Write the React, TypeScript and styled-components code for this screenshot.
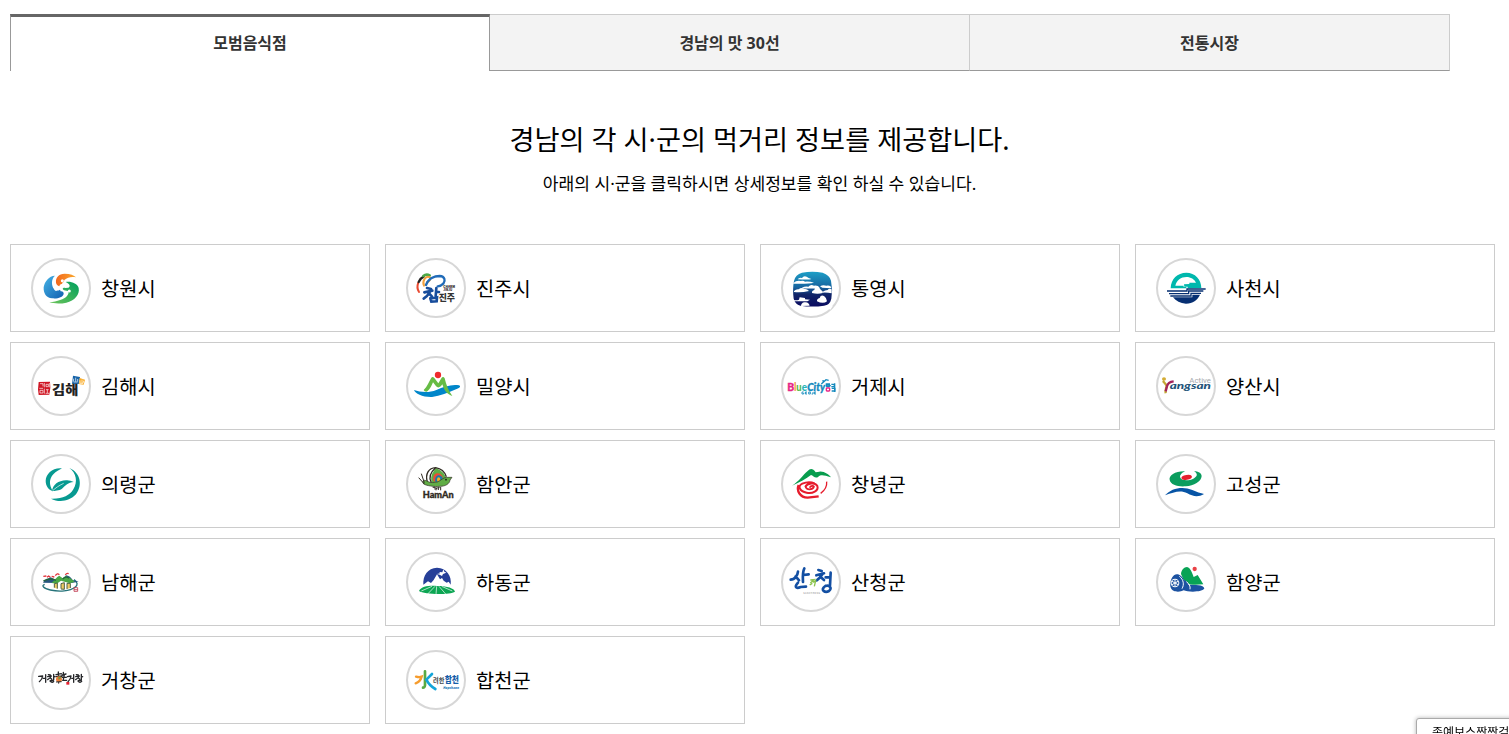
import React from 'react';
import styled, { createGlobalStyle } from 'styled-components';

const GlobalStyle = createGlobalStyle`
  * { box-sizing: border-box; }
  html, body { margin: 0; padding: 0; background: #fff; overflow: hidden; }
  body { font-family: 'Noto Sans', 'Noto Sans CJK KR', sans-serif; color: #000; }
`;

const Page = styled.main`
  height: 734px;
  padding: 14px 0 0 10px;
  overflow: hidden;
`;

const TabList = styled.ul`
  display: flex;
  width: 1440px;
  height: 57px;
  margin: 0;
  padding: 0;
  list-style: none;
`;

const Tab = styled.li<{ $active?: boolean }>`
  flex: ${(p) => (p.$active ? '0 0 480px' : '1 1 0')};
  display: flex;
  align-items: center;
  justify-content: center;
  padding-bottom: ${(p) => (p.$active ? '2px' : '0')};
  font-size: 16px;
  line-height: 24px;
  font-weight: 700;
  color: #333;
  cursor: pointer;
  background: ${(p) => (p.$active ? '#fff' : '#f3f3f3')};
  border-style: solid;
  border-width: ${(p) => (p.$active ? '3px 1px 0 1px' : '1px 0 1px 0')};
  border-color: ${(p) => (p.$active ? '#666 #999 #999 #999' : '#ccc #ccc #999 #ccc')};
  &:last-child {
    flex: 0 0 481px;
    border-left-width: 1px;
    border-right-width: 1px;
  }
`;

const Intro = styled.header`
  height: 173px;
  padding-top: 49px;
  text-align: center;
`;

const Title = styled.h1`
  margin: 0;
  font-size: 27.2px;
  line-height: 40px;
  font-weight: 400;
`;

const Guide = styled.p`
  margin: 11px 0 0;
  font-size: 17.1px;
  line-height: 26px;
`;

const RegionGrid = styled.ul`
  display: grid;
  grid-template-columns: repeat(4, 360px);
  grid-auto-rows: 88px;
  gap: 10px 15px;
  margin: 0;
  padding: 0;
  list-style: none;
`;

const RegionCard = styled.li`
  display: flex;
  align-items: center;
  gap: 10px;
  padding: 0 20px;
  border: 1px solid #ccc;
  cursor: pointer;
`;

const Badge = styled.span`
  flex: none;
  width: 60px;
  height: 60px;
  border: 2px solid #d7d7d7;
  border-radius: 50%;
  svg { display: block; width: 56px; height: 56px; overflow: visible; }
`;

const RegionName = styled.span`
  padding-top: 2px;
  font-size: 19.8px;
  line-height: 30px;
`;

const Toast = styled.aside`
  position: fixed;
  left: 1416px;
  top: 718px;
  width: 140px;
  height: 40px;
  padding: 6px 0 0 15px;
  border: 1px solid #aaa;
  border-radius: 3px;
  background: #fff;
  box-shadow: 0 0 4px rgba(0, 0, 0, 0.3);
  font-size: 12px;
  line-height: 16px;
  white-space: nowrap;
`;

const KR = "'Noto Sans CJK KR', sans-serif";

/* Emblem artwork is drawn on a three-times grid; `row` picks the vertical origin. */
const Emblem = ({ row = 0, children }: { row?: number; children: React.ReactNode }) => (
  <svg viewBox={`99 ${60 + row * 294} 168 168`} fontFamily={KR} aria-hidden="true">{children}</svg>
);

const Changwon = () => (
  <Emblem>
    <defs>
      <linearGradient id="cwB" x1="0" y1="0" x2="1" y2="1"><stop stopColor="#45b4e6" /><stop offset="1" stopColor="#125fb0" /></linearGradient>
      <linearGradient id="cwO" x1="0" y1="0" x2="1" y2="0"><stop stopColor="#f2671f" /><stop offset="1" stopColor="#fba92c" /></linearGradient>
      <linearGradient id="cwG" x1="0" y1="1" x2="1" y2="0"><stop stopColor="#6dc45a" /><stop offset="1" stopColor="#009f5c" /></linearGradient>
    </defs>
    <path fill="url(#cwB)" d="M165 107C147 108 134 124 131 142C130 160 139 174 156 175C173 177 188 172 191 162C192 157 187 153 182 154L180 149C174 153 166 153 162 147C154 137 153 116 165 107Z" />
    <path fill="url(#cwO)" d="M168 128C166 112 176 102 194 101C211 101 222 106 228 112C215 109 203 111 193 120C192 124 191 127 188 127L186 132C182 131 179 134 178 139C173 137 169 133 168 128Z" />
    <path fill="url(#cwG)" d="M197 126C213 123 232 130 236 144C240 164 224 182 199 188C181 192 162 191 148 187C172 184 193 178 201 168C206 162 207 157 204 153L192 151C185 147 189 142 196 144L205 143C213 140 209 131 197 126Z" />
    <circle cx="187" cy="122" r="4.5" fill="#fff" /><circle cx="208" cy="153" r="4.5" fill="#fff" /><circle cx="168" cy="148" r="4.5" fill="#fff" />
  </Emblem>
);

const Jinju = () => (
  <Emblem>
    <g fill="none" strokeLinecap="round">
      <path d="M132 156C126 147 126 138 130 128" stroke="#e94a31" strokeWidth="6" />
      <path d="M131 126C135 118 139 113 146 110" stroke="#222" strokeWidth="7" />
      <path d="M145 108C151 103 158 103 164 106" stroke="#4ca846" strokeWidth="8" />
      <path d="M147 137C141 124 151 105 165 112C169 116 162 126 156 126" stroke="#f2a03b" strokeWidth="6" />
      <path d="M153 135C160 116 178 108 194 108C210 109 212 122 205 131C200 136 194 139 188 139" stroke="#206bb8" strokeWidth="7" />
      <path d="M156 144L168 147M148 157L172 152M166 154C160 164 154 171 146 176M163 161L171 170M184 144L182 168M184 156L192 156M166 175L186 172L185 184L169 185L166 175" stroke="#174d9c" strokeWidth="8" />
    </g>
    <text x="191" y="182" fontSize="27" fontWeight="900" textLength="49" lengthAdjust="spacingAndGlyphs" fill="#333">진주</text>
    <text x="205" y="144" fontSize="9" fontWeight="900" textLength="35" lengthAdjust="spacingAndGlyphs" fill="#222">CHARM</text>
    <text x="205" y="154" fontSize="9" fontWeight="900" textLength="27" lengthAdjust="spacingAndGlyphs" fill="#222">JINJU</text>
  </Emblem>
);

const Tongyeong = () => (
  <Emblem>
    <defs><linearGradient id="ty" x1="0" y1="0" x2="0" y2="1"><stop stopColor="#1d9fc7" /><stop offset=".45" stopColor="#17649f" /><stop offset=".65" stopColor="#112669" /><stop offset="1" stopColor="#0b0b60" /></linearGradient></defs>
    <path fill="url(#ty)" d="M156 98Q187 92 218 98Q239 105 243 122Q249 149 244 176Q240 195 222 197Q187 202 151 197Q135 192 131 176Q127 147 132 123Q136 103 156 98Z" />
    <g fill="#fff">
      <path d="M143 118Q147 112 156 114Q161 106 170 110Q175 114 184 117Q178 120 143 118Z" />
      <path d="M130 129Q140 120 152 123Q160 120 165 125Q180 124 192 128Q178 132 130 131Z" />
      <path d="M156 143Q165 138 175 140Q182 132 192 137Q204 135 209 143Q193 147 156 145Z" />
      <path d="M210 139Q219 133 229 137Q237 135 243 140L244 145L217 143Z" />
      <path d="M132 153Q138 147 146 148Q154 141 164 147Q171 146 177 153Q153 159 132 156Z" />
      <path d="M186 159Q185 152 193 150Q195 138 206 141Q212 150 218 154L218 159Q203 163 186 159Z" />
      <path d="M218 155Q225 150 233 150Q237 144 245 148V160Q231 157 218 158Z" />
      <path d="M131 180Q139 182 147 179L149 172L165 174V178L180 179L172 184H132Z" />
      <path d="M201 184Q200 176 209 174Q212 164 222 168Q230 173 231 184Q220 193 201 184Z" />
      <path d="M153 198Q153 190 162 187Q176 184 179 197Z" />
      <path d="M225 200Q230 196 236 197L242 192L248 199L241 209Z" />
    </g>
  </Emblem>
);

const Sacheon = () => (
  <Emblem>
    <path fill="#00b8ad" d="M137 145C138 117 157 98 184 98C210 98 229 118 229 144L188 145V140H178L177 133L193 132V128H213C208 118 198 111 184 111C168 111 155 120 151 137H176V141H184V145Z" />
    <g fill="none" stroke="#062f72" strokeWidth="4">
      <path d="M126 153H186V147H242M132 161H191V153H235M136 168H198V160H228" />
    </g>
    <path fill="#062f72" d="M144 172H202V164H225C217 181 204 190 183 191C166 190 153 183 144 172Z" />
  </Emblem>
);

const Gimhae = () => (
  <Emblem row={1}>
    <path d="M116 426L150 425L151 443L148 464L116 465L114 448Z" fill="#cf1725" />
    <path d="M120 431H129V439M133 429V442M138 433H145V440H138ZM148 429V442M118 445H129M120 451H129V459H120ZM133 446V461M138 449H146M142 449V459M137 460H148" fill="none" stroke="#fff" strokeWidth="2" />
    <text x="156" y="461" fontSize="38" fontWeight="900" textLength="79" lengthAdjust="spacingAndGlyphs" fill="#222">김해</text>
    <path d="M219 407L240 411L237 432L216 431Z" fill="#1763a8" />
    <path d="M239 414L255 419L251 434L236 432Z" fill="#f9ab25" />
    <path d="M221 416L220 425M227 413V425M233 417V425M221 426H233M240 421V430M246 419V430M251 422L249 430M239 430H249" stroke="#fff" strokeWidth="2" fill="none" />
  </Emblem>
);

const Miryang = () => (
  <Emblem row={1}>
    <circle cx="189" cy="405" r="9.5" fill="#ef2b2d" />
    <path fill="#0086ca" d="M117 450C136 457 162 459 184 450C207 440 230 432 252 436C259 439 254 444 243 448C219 458 196 468 171 471C144 472 120 461 117 450Z" />
    <path fill="#66bc45" d="M146 450C157 440 162 424 169 413Q173 409 178 414L190 430L200 413Q205 408 209 415C213 432 219 450 232 468C217 463 208 453 202 433C196 443 188 446 181 436L174 427C169 438 163 453 154 455Q148 455 146 450Z" />
  </Emblem>
);

const Geoje = () => (
  <Emblem row={1}>
    <g fontWeight="900" fontFamily="Lato, sans-serif">
      <text x="112" y="452" fontSize="34" fill="#e62687" stroke="#e62687" textLength="21" lengthAdjust="spacingAndGlyphs">B</text>
      <text x="133" y="452" fontSize="31" fill="#f08b24" textLength="6" lengthAdjust="spacingAndGlyphs">l</text>
      <text x="139" y="452" fontSize="31" fill="#53b947" textLength="16" lengthAdjust="spacingAndGlyphs">u</text>
      <text x="155" y="452" fontSize="31" fill="#29b4ba" textLength="16" lengthAdjust="spacingAndGlyphs">e</text>
      <text x="172" y="452" fontSize="32" fontStyle="italic" fill="#1489bd" stroke="#1489bd" textLength="53" lengthAdjust="spacingAndGlyphs">City</text>
    </g>
    <path d="M161 456H156V462H161V459M171 456H166V462H171M166 459H170M176 456H181V462H176ZM189 456V462H185M198 456H193V462H198M193 459H197" fill="none" stroke="#118abd" strokeWidth="2.6" />
    <path d="M214 432L228 419L236 421M220 427L219 420" fill="none" stroke="#1489bd" strokeWidth="4" />
    <path d="M227 432H240M228 437Q234 433 240 437Q234 443 228 437M244 433H253V440M244 440H256M245 445H255V453H245M254 430V456" fill="none" stroke="#1489bd" strokeWidth="4" />
    <rect x="229" y="444" width="10" height="9" rx="2" fill="#fff" stroke="#e62687" strokeWidth="4" />
  </Emblem>
);

const Yangsan = () => (
  <Emblem row={1}>
    <ellipse cx="117" cy="417" rx="6" ry="5" fill="#d3ac35" />
    <path d="M113 423C117 425 120 431 125 437C123 445 120 452 122 460" fill="none" stroke="#c4a735" strokeWidth="7" />
    <path d="M146 424C136 425 128 430 126 439L122 454" fill="none" stroke="#a3225b" strokeWidth="7" />
    <text x="193" y="429" fontSize="19" fontFamily="Roboto" fill="#a5a9ad" textLength="65" lengthAdjust="spacingAndGlyphs">Active</text>
    <text x="134" y="448" fontSize="26" fontFamily="Lato" fontWeight="900" fontStyle="italic" fill="#235479" textLength="124" lengthAdjust="spacingAndGlyphs">angsan</text>
  </Emblem>
);

const Uiryeong = () => (
  <Emblem>
    <g fill="#079a91">
      <path d="M186 97C158 94 138 113 137 134C137 150 146 162 158 165C147 146 147 129 160 115C168 106 178 102 186 97Z" />
      <path d="M208 96C241 109 249 147 228 175C208 197 176 200 153 188C188 189 209 179 220 160C234 137 229 111 208 96Z" />
      <path d="M156 166C158 146 175 134 198 133Q210 132 221 138C204 140 197 148 186 158C177 165 164 163 156 166Z" />
    </g>
    <path d="M158 164C167 156 176 149 191 142" fill="none" stroke="#fff" strokeWidth="2" />
  </Emblem>
);

const Haman = () => (
  <Emblem>
    <path d="M157 138C150 114 161 96 182 95C199 98 209 107 214 122L184 140Z" fill="#fff" />
    <path d="M183 96C170 112 164 127 172 141L214 132Q211 107 183 96Z" fill="#60ad45" />
    <path d="M157 138C150 114 161 96 182 95C199 98 209 107 214 122M182 95C166 109 161 126 169 140" fill="none" stroke="#302b22" strokeWidth="4" />
    <path d="M176 136Q171 119 184 112Q197 110 203 122L201 138Z" fill="#ef4935" />
    <path d="M181 137Q178 122 189 118Q199 116 203 126L201 139Z" fill="#187baa" />
    <ellipse cx="191" cy="131" rx="5" ry="7" fill="#f4ad28" />
    <path fill="#60ad45" stroke="#302b22" strokeWidth="2" d="M146 144C139 131 149 131 157 136C168 142 178 139 187 138C198 133 205 125 214 124L231 124L225 132C224 143 212 151 195 151C177 153 155 149 146 144Z" />
    <circle cx="213" cy="131" r="2.5" fill="#111" />
    <path d="M131 125L148 144M139 113L148 140M173 154H180V161M183 153V163M187 155H194M190 155V162M197 153V163M183 158H187" fill="none" stroke="#302b22" strokeWidth="3" />
    <text x="143" y="186" fontSize="28" textLength="93" lengthAdjust="spacingAndGlyphs" fill="#302b22" stroke="#302b22" fontWeight="900" fontFamily="Lato, sans-serif">HamAn</text>
  </Emblem>
);

const Changnyeong = () => (
  <Emblem>
    <path fill="#079d4e" d="M126 149C147 136 159 117 173 105C181 96 189 97 197 109L208 107C222 105 237 116 243 124C223 118 213 115 205 122C196 129 190 119 183 117C168 128 150 139 126 149Z" />
    <g fill="none" stroke="#e61c2c">
      <path d="M166 150C169 164 188 162 192 152C192 148 181 149 179 155" strokeWidth="5" />
      <path d="M166 152C171 143 195 137 202 150C207 164 187 174 170 170C149 166 141 150 157 143C169 138 184 138 194 142" strokeWidth="6" />
      <path d="M146 147C138 165 151 184 173 185L206 181" strokeWidth="7" />
      <path d="M230 137Q232 158 212 172" strokeWidth="4" />
    </g>
  </Emblem>
);

const Goseong = () => (
  <Emblem>
    <path fill="#0b9d5e" d="M180 106C151 105 131 118 134 132C137 147 159 153 182 151C207 149 229 137 230 120C229 111 220 106 207 106C219 112 218 122 205 128C191 135 169 134 166 125C163 118 170 111 180 106Z" />
    <ellipse cx="185" cy="124" rx="16" ry="7" transform="rotate(-10 185 124)" fill="#e51e2c" />
    <path fill="#0754a5" d="M120 178C139 156 174 150 202 162C214 168 228 171 237 174C219 185 203 181 187 172C166 161 147 169 120 178Z" />
  </Emblem>
);

const Namhae = () => (
  <Emblem row={1}>
    <path d="M134 445C123 449 130 457 151 462C178 468 210 466 225 454Q239 443 222 431" fill="none" stroke="#26737a" strokeWidth="4" />
    <path fill="#28577f" d="M129 440C137 429 146 427 152 424C160 427 168 434 172 441ZM186 433L198 418Q209 419 218 432L236 437L214 441Z" />
    <path fill="#49a846" d="M155 441C165 432 169 423 178 419L188 427L197 420C209 424 215 431 224 437L210 442L183 434L170 443Z" />
    <path d="M163 455V443L172 441V458M183 458V443L193 440V460L183 459M201 459V442H211V456" fill="#efca65" stroke="#4e6245" strokeWidth="3" />
    <path d="M130 421L139 420M141 424L146 420L151 424M155 421L163 423M166 419Q172 410 178 416M196 417Q200 410 206 413" fill="none" stroke="#e0343c" strokeWidth="4" />
    <path d="M130 435Q150 424 168 433M188 429Q197 419 207 427" fill="none" stroke="#24643f" strokeWidth="4" />
    <path d="M222 455H233V466H222ZM222 461H233" fill="none" stroke="#bf374e" strokeWidth="2.5" />
  </Emblem>
);

const Hadong = () => (
  <Emblem row={1}>
    <path fill="#263f98" d="M145 446C143 419 158 396 186 395C215 395 231 421 227 446L221 437L215 440L206 434L201 426L195 430L186 415L176 432L168 441L159 436Z" />
    <path fill="#fff" d="M193 408L202 409L205 400L208 407L214 410L204 414L201 420L194 416L186 414L195 412Z" />
    <path fill="#0ca653" d="M132 465C139 450 166 448 186 450C212 449 238 456 240 467C225 477 147 476 132 465Z" />
    <path d="M139 465L171 451M158 474L180 451M183 475L185 451M212 474L192 451M232 465L200 451" stroke="#fff" strokeWidth="2" />
  </Emblem>
);

const Sancheong = () => (
  <Emblem row={1}>
    <g fill="none" stroke="#134fa3" strokeWidth="8" strokeLinecap="round" strokeLinejoin="round">
      <path d="M122 431C135 431 143 417 144 407M137 421L147 433M163 397C157 409 158 421 159 438M160 417L176 415M144 440C132 453 138 459 152 453L168 452" />
      <path d="M205 402L215 405M199 418L222 412M217 415Q210 426 200 433M211 422L222 432M242 410L240 448M227 424L238 424M226 450C208 463 226 471 237 465C248 457 238 445 226 450" />
    </g>
    <path d="M181 432L192 431L181 441M188 439L197 434L193 451M179 447L187 442" fill="none" stroke="#8bc34c" strokeWidth="4" />
    <text x="160" y="473" fontSize="7" fill="#888" textLength="50">SANCHEONG</text>
  </Emblem>
);

const Hamyang = () => (
  <Emblem row={1}>
    <circle cx="209" cy="399" r="6.5" fill="#e94145" />
    <path fill="#08a355" d="M168 414C169 402 177 393 186 393C197 396 201 410 206 423L218 417L235 445C215 446 199 447 186 443L175 430Z" />
    <path fill="#1c52a1" d="M147 418C158 410 171 419 177 432C187 436 193 440 189 446C210 447 236 445 238 457C235 469 189 469 176 463C164 470 139 470 136 451C135 442 137 427 147 418Z" />
    <circle cx="150" cy="441" r="13" fill="#fff" />
    <circle cx="150" cy="441" r="10" fill="#1c52a1" />
    <path d="M150 431V451M141 436L159 446M141 446L159 436M163 421C176 431 178 446 171 458M184 437C192 443 197 450 195 460" fill="none" stroke="#fff" strokeWidth="3" />
  </Emblem>
);

const Geochang = () => (
  <Emblem row={2}>
    <g fill="none" stroke="#26272a" strokeWidth="4" strokeLinecap="round" strokeLinejoin="round">
      <path d="M116 721L128 720Q127 730 118 737M137 716V739M130 727H136M145 716L151 717M143 722L154 720Q150 727 143 731M150 725L155 729M161 715V731M161 723L165 722M150 735Q158 730 161 736Q157 742 150 735" />
      <path d="M202 722L213 720Q212 730 204 737M221 716V739M215 727H221M229 716L235 717M227 722L238 720Q234 727 227 731M234 725L239 729M244 715V731M244 723L248 722M234 735Q242 730 245 736Q240 742 234 735" />
      <path d="M168 716L184 713M175 708V717M168 722L186 720M190 709V717M186 717L198 714M186 724L199 724M193 717L190 730M188 733H200" />
    </g>
    <circle cx="177" cy="730" r="9" fill="#ef7e38" />
    <path d="M168 738L185 737M176 738V743" stroke="#26272a" strokeWidth="3" fill="none" />
    <path d="M174 726L182 725L177 730" fill="none" stroke="#49a446" strokeWidth="3" />
    <rect x="199" y="738" width="9" height="8" fill="#e32230" />
  </Emblem>
);

const Hapcheon = () => (
  <Emblem row={2}>
    <g fill="none" strokeLinecap="round">
      <path d="M150 706V748Q149 755 144 755" stroke="#5aaa43" strokeWidth="8" />
      <path d="M123 722Q133 725 140 722Q136 737 122 742" stroke="#f69c2d" strokeWidth="7" />
      <path d="M171 714L154 731Q163 749 181 759" stroke="#14a5d9" strokeWidth="8" />
    </g>
    <text x="174" y="740" fontSize="21" fontWeight="700" fill="#43494c" textLength="34" lengthAdjust="spacingAndGlyphs">려한</text>
    <text x="209" y="742" fontSize="27" fontWeight="900" fill="#165da8" textLength="43" lengthAdjust="spacingAndGlyphs">합천</text>
    <text x="204" y="758" fontSize="11" fontWeight="900" fontStyle="italic" fill="#1675b7" textLength="47" lengthAdjust="spacingAndGlyphs">Hapcheon</text>
  </Emblem>
);

const regions = [
  { name: '창원시', Logo: Changwon }, { name: '진주시', Logo: Jinju },
  { name: '통영시', Logo: Tongyeong }, { name: '사천시', Logo: Sacheon },
  { name: '김해시', Logo: Gimhae }, { name: '밀양시', Logo: Miryang },
  { name: '거제시', Logo: Geoje }, { name: '양산시', Logo: Yangsan },
  { name: '의령군', Logo: Uiryeong }, { name: '함안군', Logo: Haman },
  { name: '창녕군', Logo: Changnyeong }, { name: '고성군', Logo: Goseong },
  { name: '남해군', Logo: Namhae }, { name: '하동군', Logo: Hadong },
  { name: '산청군', Logo: Sancheong }, { name: '함양군', Logo: Hamyang },
  { name: '거창군', Logo: Geochang }, { name: '합천군', Logo: Hapcheon },
];

export default function App() {
  return (
    <>
      <GlobalStyle />
      <Page>
        <TabList>
          <Tab $active>모범음식점</Tab>
          <Tab>경남의 맛 30선</Tab>
          <Tab>전통시장</Tab>
        </TabList>
        <Intro>
          <Title>경남의 각 시·군의 먹거리 정보를 제공합니다.</Title>
          <Guide>아래의 시·군을 클릭하시면 상세정보를 확인 하실 수 있습니다.</Guide>
        </Intro>
        <RegionGrid>
          {regions.map(({ name, Logo }) => (
            <RegionCard key={name}>
              <Badge><Logo /></Badge>
              <RegionName>{name}</RegionName>
            </RegionCard>
          ))}
        </RegionGrid>
      </Page>
      <Toast>존예보스짱짱걸</Toast>
    </>
  );
}
